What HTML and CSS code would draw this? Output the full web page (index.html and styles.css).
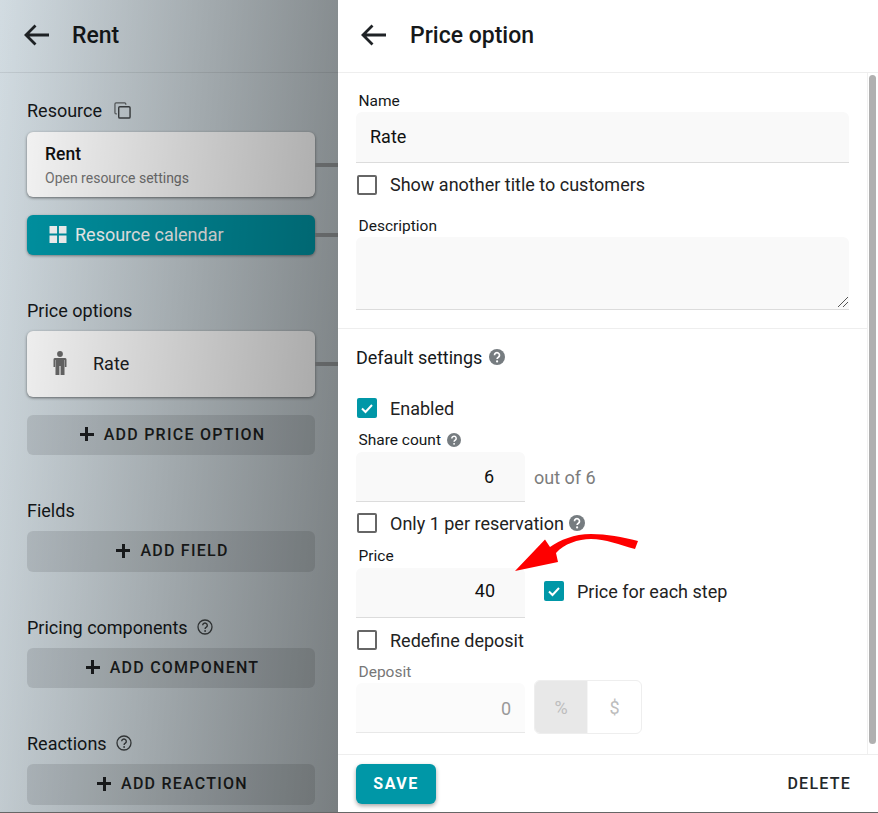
FILE: index.html
```html
<!DOCTYPE html>
<html lang="en">
<head>
<meta charset="utf-8">
<title>Price option</title>
<link rel="stylesheet" href="styles.css">
</head>
<body>
<div class="app">
  <aside class="left">
    <header class="head head-left">
      <svg class="back" viewBox="0 0 26 24"><path d="M26 12H3M12.500 2.500L3 12l9.500 9.500" fill="none" stroke="#1f2326" stroke-width="2.800"/></svg>
      <h1 class="title">Rent</h1>
    </header>
    <div class="left-body">
      <div class="sec-label sec-resource">Resource
        <svg class="copy" viewBox="0 0 18 18"><path d="M3 12.500H2.200A1.200 1.200 0 0 1 1 11.300V2.200A1.200 1.200 0 0 1 2.200 1h9.100a1.200 1.200 0 0 1 1.200 1.200V3" fill="none" stroke="#5c6062" stroke-width="1.300"/><rect x="5" y="5" width="12" height="12" rx="1.200" fill="none" stroke="#3f4345" stroke-width="1.500"/></svg>
      </div>
      <div class="card card-resource link">
        <div class="card-title">Rent</div>
        <div class="card-sub">Open resource settings</div>
      </div>
      <div class="calendar link">
        <svg class="grid" viewBox="0 0 18 18"><path d="M0 0h8v8H0zM10 0h8v8h-8zM0 10h8v8H0zM10 10h8v8h-8z" fill="#fff"/></svg>
        Resource calendar
      </div>
      <div class="sec-label sec-price">Price options</div>
      <div class="card card-rate link">
        <svg class="person" viewBox="0 0 14 24"><circle cx="7" cy="3" r="2.900" fill="#6b6b6b"/><path d="M2.500 7h9A1.500 1.500 0 0 1 13.500 8.500V16h-1.600v-7h-.4v15H7.600v-9H6.400v9H2.500V9h-.4v7H.5V8.500A1.500 1.500 0 0 1 2.500 7z" fill="#6b6b6b"/></svg>
        <span class="rate-name">Rate</span>
      </div>
      <button class="add add-price"><span class="plus"></span>ADD PRICE OPTION</button>
      <div class="sec-label sec-fields">Fields</div>
      <button class="add add-field"><span class="plus"></span>ADD FIELD</button>
      <div class="sec-label sec-pricing">Pricing components
        <svg class="q-outline" viewBox="0 0 16 16"><circle cx="8" cy="8" r="7" fill="none" stroke="#3c4042" stroke-width="1.300"/><path d="M5.700 6.300a2.300 2.300 0 1 1 3.600 1.900c-.8.500-1.200.9-1.200 1.800" fill="none" stroke="#3c4042" stroke-width="1.400"/><circle cx="8.100" cy="12" r=".9" fill="#3c4042"/></svg>
      </div>
      <button class="add add-comp"><span class="plus"></span>ADD COMPONENT</button>
      <div class="sec-label sec-react">Reactions
        <svg class="q-outline" viewBox="0 0 16 16"><circle cx="8" cy="8" r="7" fill="none" stroke="#3c4042" stroke-width="1.300"/><path d="M5.700 6.300a2.300 2.300 0 1 1 3.600 1.900c-.8.500-1.200.9-1.200 1.800" fill="none" stroke="#3c4042" stroke-width="1.400"/><circle cx="8.100" cy="12" r=".9" fill="#3c4042"/></svg>
      </div>
      <button class="add add-react"><span class="plus"></span>ADD REACTION</button>
    </div>
    <div class="scrim"></div>
  </aside>

  <main class="right">
    <header class="head head-right">
      <svg class="back" viewBox="0 0 26 24"><path d="M26 12H3M12.500 2.500L3 12l9.500 9.500" fill="none" stroke="#1f2326" stroke-width="2.800"/></svg>
      <h1 class="title title-right">Price option</h1>
    </header>
    <div class="scroll">
      <div class="form">
        <section class="block block-top">
          <div class="lbl">Name</div>
          <div class="field field-name">Rate</div>
          <label class="check check-title"><span class="box"></span>Show another title to customers</label>
          <div class="lbl lbl-desc">Description</div>
          <div class="field field-desc">
            <svg class="resize" viewBox="0 0 10 10"><path d="M0 10L10 0M5 10l5-5" stroke="#555" stroke-width="1"/></svg>
          </div>
        </section>
        <section class="block block-def">
          <div class="def-title">Default settings
            <svg class="q" viewBox="0 0 16 16"><circle cx="8" cy="8" r="8" fill="#767c80"/><path d="M5.500 6.200a2.500 2.500 0 1 1 3.900 2c-.9.600-1.300.9-1.300 1.800" fill="none" stroke="#fff" stroke-width="1.700"/><circle cx="8.100" cy="12.400" r="1.100" fill="#fff"/></svg>
          </div>
          <label class="check check-enabled"><span class="box on"><svg viewBox="0 0 20 20"><path d="M5 10.500l3.500 3.500L15 7" fill="none" stroke="#fff" stroke-width="2"/></svg></span>Enabled</label>
          <div class="lbl lbl-small lbl-share">Share count
            <svg class="q q-small" viewBox="0 0 16 16"><circle cx="8" cy="8" r="8" fill="#767c80"/><path d="M5.500 6.200a2.500 2.500 0 1 1 3.900 2c-.9.600-1.300.9-1.300 1.800" fill="none" stroke="#fff" stroke-width="1.700"/><circle cx="8.100" cy="12.400" r="1.100" fill="#fff"/></svg>
          </div>
          <div class="row">
            <div class="field num">6</div>
            <span class="suffix">out of 6</span>
          </div>
          <label class="check check-only"><span class="box"></span>Only 1 per reservation
            <svg class="q" viewBox="0 0 16 16"><circle cx="8" cy="8" r="8" fill="#767c80"/><path d="M5.500 6.200a2.500 2.500 0 1 1 3.900 2c-.9.600-1.300.9-1.300 1.800" fill="none" stroke="#fff" stroke-width="1.700"/><circle cx="8.100" cy="12.400" r="1.100" fill="#fff"/></svg>
          </label>
          <div class="lbl lbl-small lbl-price">Price</div>
          <div class="row">
            <div class="field num num-price">40</div>
            <label class="check check-step"><span class="box on"><svg viewBox="0 0 20 20"><path d="M5 10.500l3.500 3.500L15 7" fill="none" stroke="#fff" stroke-width="2"/></svg></span>Price for each step</label>
          </div>
          <label class="check check-redef"><span class="box"></span>Redefine deposit</label>
          <div class="lbl lbl-small lbl-dep">Deposit</div>
          <div class="row row-dep">
            <div class="field num disabled">0</div>
            <div class="toggle"><span class="tg tg-on">%</span><span class="tg">$</span></div>
          </div>
        </section>
      </div>
      <div class="scrollbar"><div class="thumb"></div></div>
    </div>
    <footer class="foot">
      <button class="save">SAVE</button>
      <button class="delete">DELETE</button>
    </footer>
    <svg class="arrow" viewBox="0 0 140 50"><path d="M3 41L33 9.500 38 17C48 10 62 4 79 4 95 4 110 7 126 11L123 19C108 15 93 9 79 9 66 9 52 14 44 23L46 32z" fill="#fe0000"/></svg>
  </main>
</div>
</body>
</html>
```
FILE: styles.css
```css
* { box-sizing: border-box; }
html, body { margin: 0; height: 100%; }
body { font-family: Roboto, "Liberation Sans", sans-serif; color: #1d2124; overflow: hidden; background: #666; }
.app { display: flex; width: 878px; height: 812px; }

.left { position: relative; width: 338px; flex: none; background: linear-gradient(95deg, #d6e0e6, #c2cbcf); overflow: hidden; }
.scrim { position: absolute; inset: 0; background: linear-gradient(95deg, rgba(0,0,0,.02), rgba(0,0,0,.38)); }
.head { height: 73px; display: flex; align-items: center; padding-bottom: 2px; border-bottom: 1px solid rgba(0,0,0,.08); }
.head-left { padding-left: 23px; }
.head-right { padding-left: 22px; background: #fff; border-bottom-color: #eeeeee; }
.back { width: 26px; height: 24px; flex: none; }
.title { margin: 0 0 0 23px; font-size: 23px; font-weight: 500; color: #15181a; }
.title-right { margin-left: 24px; }

.left-body { padding: 0 23px 0 27px; }
.sec-label { display: flex; align-items: center; font-size: 18px; height: 22px; color: #15181a; }
.sec-resource { margin-top: 26px; }
.sec-price { margin-top: 44px; }
.sec-fields { margin-top: 44px; }
.sec-pricing { margin-top: 44px; }
.sec-react { margin-top: 44px; }
.copy { width: 17px; height: 17px; margin-left: 12px; }
.q-outline { width: 16px; height: 16px; margin-left: 9px; }

.card { background: #fff; border-radius: 6px; box-shadow: 0 1px 3px rgba(0,0,0,.5); }
.link { position: relative; }
.link::after { content: ""; position: absolute; left: 100%; top: 50%; width: 23px; height: 4px; margin-top: -2px; background: #94989a; }
.card-resource { height: 65px; margin-top: 11px; padding: 10px 18px; }
.card-title { font-size: 17.500px; font-weight: 500; color: #111; line-height: 24px; }
.card-sub { font-size: 14px; color: #777; line-height: 24px; }
.calendar { display: flex; align-items: center; height: 40px; margin-top: 18px; padding: 0 0 2px 22px; background: #0097a7; color: #fff; font-size: 18px; border-radius: 6px; box-shadow: 0 1px 3px rgba(0,0,0,.4); }
.grid { width: 18px; height: 17px; margin-right: 8px; }
.card-rate { display: flex; align-items: center; height: 66px; margin-top: 10px; padding: 0 0 2px 26px; }
.person { width: 14px; height: 24px; }
.rate-name { margin-left: 26px; font-size: 18px; }
.add { display: flex; align-items: center; justify-content: center; width: 288px; height: 40px; padding: 0 0 2px 3px; border: 0; border-radius: 6px; background: rgba(0,0,0,.1); font-family: inherit; font-size: 16px; font-weight: 500; letter-spacing: 1.250px; color: #1c1e20; }
.add-price { margin-top: 18px; }
.add-field { margin-top: 10px; height: 41px; }
.add-comp { margin-top: 10px; }
.add-react { margin-top: 10px; height: 41px; }
.plus { width: 14px; height: 14px; margin-right: 10px; background: linear-gradient(#1c1e20,#1c1e20) center/100% 3px no-repeat, linear-gradient(#1c1e20,#1c1e20) center/3px 100% no-repeat; }

.right { position: relative; flex: 1; display: flex; flex-direction: column; background: #fff; }
.scroll { flex: 1; display: flex; min-height: 0; }
.form { flex: 1; min-width: 0; }
.scrollbar { width: 11px; flex: none; padding: 2px 2px 10px 1px; background: #fff; border-left: 1px solid #f0f0f0; }
.thumb { height: 100%; background: #b0b0b0; border-radius: 4px; }
.block { padding: 0 18px; }
.block-top { height: 256px; padding-top: 17px; border-bottom: 1px solid #eeeeee; }
.lbl { display: flex; align-items: center; height: 22px; padding-left: 2.500px; font-size: 15.500px; color: #15181a; }
.field { background: #f9f9f9; border-bottom: 1px solid #dcdcdc; border-radius: 6px 6px 0 0; font-size: 18px; color: #111; }
.field-name { height: 51px; padding: 0 14px 2px; display: flex; align-items: center; }
.check { display: flex; align-items: center; padding-left: 1px; font-size: 18px; color: #222; }
.box { display: flex; width: 20px; height: 20px; margin-right: 13px; flex: none; border: 2px solid #666; border-radius: 2px; background: #fff; }
.box.on { background: #0097a7; border: 0; }
.box svg { width: 20px; height: 20px; }
.check-title { margin-top: 12px; height: 20px; align-items: flex-start; line-height: 20px; }
.lbl-desc { margin-top: 20px; }
.field-desc { position: relative; height: 73px; }
.resize { position: absolute; right: 1px; bottom: 2px; width: 10px; height: 10px; }
.block-def { padding-top: 17px; }
.def-title { display: flex; align-items: center; height: 22px; font-size: 18px; color: #15181a; }
.q { width: 16px; height: 16px; margin-left: 7px; }
.q-small { width: 14px; height: 14px; margin-left: 6px; }
.check-enabled { margin-top: 30px; height: 20px; }
.lbl-small { height: 22px; }
.lbl-share { margin-top: 12px; padding-bottom: 2px; }
.row { display: flex; align-items: center; }
.row-dep { align-items: flex-start; }
.num { display: flex; align-items: center; justify-content: flex-end; width: 169px; height: 50px; padding-right: 31px; flex: none; }
.num-price { padding-right: 30px; padding-bottom: 4px; }
.suffix { margin-left: 9px; font-size: 18px; color: #7c7c7c; }
.check-only { margin-top: 11px; height: 20px; }
.check-only .q { margin-left: 5px; }
.lbl-price { margin-top: 11px; height: 24px; }
.check-step { margin-left: 18px; margin-bottom: 4px; }
.check-redef { margin-top: 12px; height: 20px; }
.lbl-dep { margin-top: 12px; height: 21px; padding-bottom: 2px; color: #777; }
.disabled { background: #fbfbfb; color: #999; padding-right: 14px; padding-top: 2px; border-bottom-color: #e8e8e8; }
.toggle { display: flex; height: 54px; margin: -3px 0 0 9px; border: 1px solid #eeeeee; border-radius: 6px; overflow: hidden; }
.tg { display: flex; align-items: center; justify-content: center; width: 53px; font-size: 18px; color: #bdbdbd; }
.tg-on { background: #e8e8e8; border-right: 1px solid #f5f5f5; }

.foot { display: flex; align-items: center; justify-content: space-between; height: 58px; padding: 0 27px 0 18px; border-top: 1px solid #eeeeee; background: #fff; }
.save { width: 80px; height: 40px; border: 0; border-radius: 6px; background: #0097a7; color: #fff; font-family: inherit; font-size: 16px; font-weight: 700; letter-spacing: 1.500px; box-shadow: 0 2px 4px rgba(0,0,0,.35); }
.delete { border: 0; padding: 0; background: none; color: #23272a; font-family: inherit; font-size: 16px; font-weight: 500; letter-spacing: 1.250px; }
.arrow { position: absolute; left: 174px; top: 530px; width: 140px; height: 50px; pointer-events: none; }
```
